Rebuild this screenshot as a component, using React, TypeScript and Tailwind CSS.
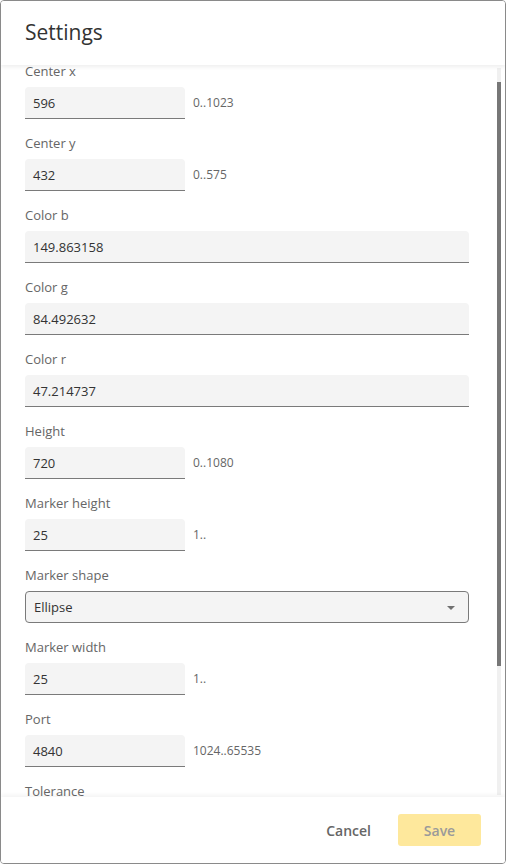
import React from "react";

type Field =
  | { label: string; value: string; kind: "short"; hint: string }
  | { label: string; value: string; kind: "full" }
  | { label: string; value: string; kind: "select" };

const fields: Field[] = [
  { label: "Center x", value: "596", kind: "short", hint: "0..1023" },
  { label: "Center y", value: "432", kind: "short", hint: "0..575" },
  { label: "Color b", value: "149.863158", kind: "full" },
  { label: "Color g", value: "84.492632", kind: "full" },
  { label: "Color r", value: "47.214737", kind: "full" },
  { label: "Height", value: "720", kind: "short", hint: "0..1080" },
  { label: "Marker height", value: "25", kind: "short", hint: "1.." },
  { label: "Marker shape", value: "Ellipse", kind: "select" },
  { label: "Marker width", value: "25", kind: "short", hint: "1.." },
  { label: "Port", value: "4840", kind: "short", hint: "1024..65535" },
  { label: "Tolerance", value: "", kind: "short", hint: "" },
];

function FieldRow({ f }: { f: Field }) {
  return (
    <div className="flex flex-col">
      <div className="h-[18px] leading-[18px] text-[13px] text-[#666666] mb-[7px]">{f.label}</div>
      {f.kind === "select" ? (
        <div className="h-[32px] w-[444px] bg-[#f4f4f4] border border-[#7a7a7a] rounded-[4px] flex items-center justify-between pl-[8px] pr-[13px] pt-[1px] text-[13px] text-[#333333]">
          <span>{f.value}</span>
          <svg width="8" height="4" viewBox="0 0 8 4">
            <path d="M0 0 L8 0 L4 4 Z" fill="#707070" />
          </svg>
        </div>
      ) : f.kind === "full" ? (
        <div className="h-[32px] w-[444px] bg-[#f4f4f4] border-b border-[#7a7a7a] rounded-t-[4px] flex items-center px-[8px] pt-[2px] text-[13px] text-[#333333]">
          {f.value}
        </div>
      ) : (
        <div className="flex items-center">
          <div className="h-[32px] w-[160px] bg-[#f4f4f4] border-b border-[#7a7a7a] rounded-t-[4px] flex items-center px-[8px] pt-[2px] text-[13px] text-[#333333]">
            {f.value}
          </div>
          <span className="ml-[8px] text-[12px] text-[#666666]">{f.hint}</span>
        </div>
      )}
    </div>
  );
}

export default function App() {
  return (
    <div
      className="w-[506px] h-[864px] bg-white border border-[#8a8a8a] rounded-[4px] flex flex-col overflow-hidden"
      style={{ fontFamily: '"Open Sans", "Noto Sans", sans-serif' }}
    >
      <div className="relative z-10 h-[64px] shrink-0 flex items-center px-[24px] bg-white shadow-[0_2px_4px_rgba(0,0,0,0.07)]">
        <h1 className="text-[21px] text-[#333333]">Settings</h1>
      </div>
      <div className="relative flex-1 overflow-hidden">
        <div className="mt-[-3px] pl-[24px] flex flex-col gap-[15px]">
          {fields.map((f) => (
            <FieldRow key={f.label} f={f} />
          ))}
        </div>
        <div className="absolute right-[4px] top-[3px] bottom-[2px] w-[4px] bg-[#f0f0f0]">
          <div className="mt-[14px] h-[584px] w-[4px] bg-[#777777]" />
        </div>
      </div>
      <div className="relative z-10 h-[66px] shrink-0 bg-white flex items-start justify-end gap-[11px] pt-[17px] pr-[24px] shadow-[0_-2px_4px_rgba(0,0,0,0.05)]">
        <button className="h-[32px] px-[16px] text-[14px] font-semibold text-[#666666]">Cancel</button>
        <button className="h-[32px] w-[83px] rounded-[3px] bg-[#fee89c] text-[14px] font-semibold text-[#9a9a9a]">Save</button>
      </div>
    </div>
  );
}
